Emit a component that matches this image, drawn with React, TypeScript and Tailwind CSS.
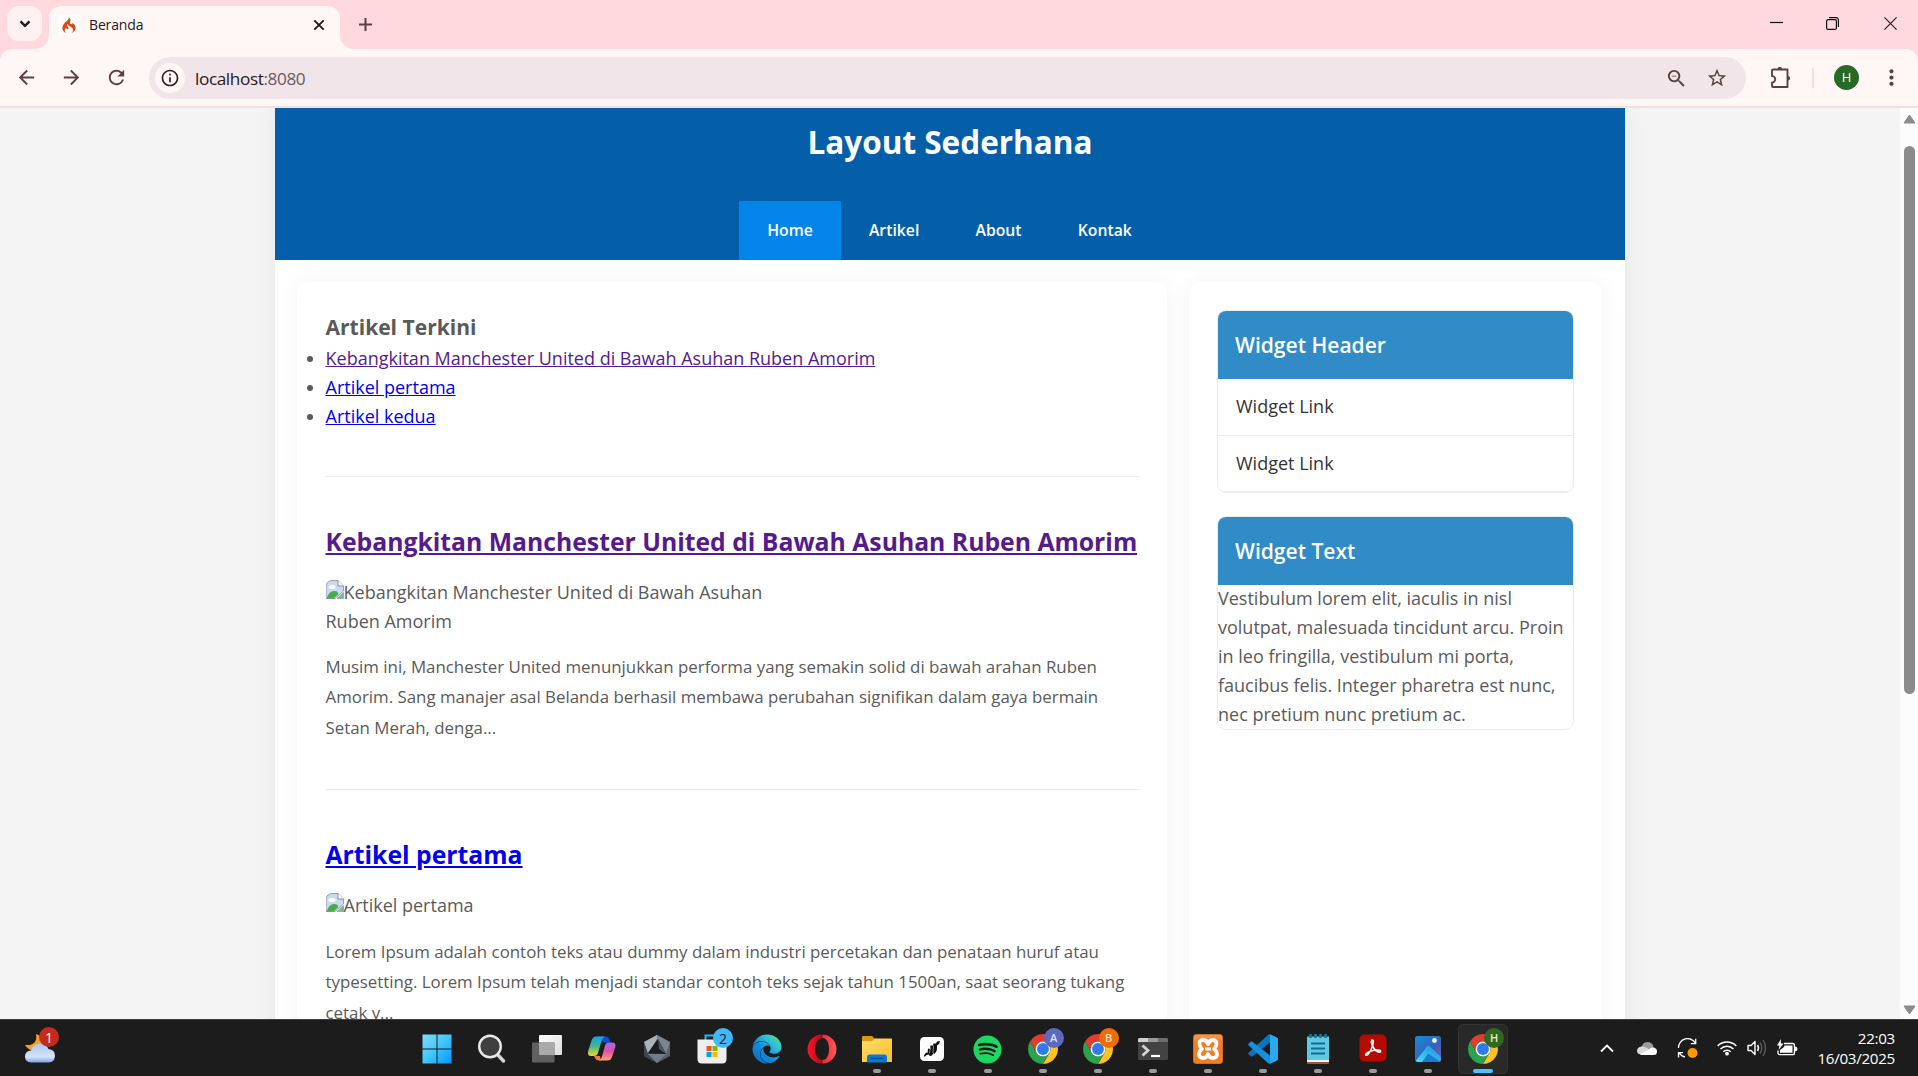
import React from "react";
import {
  MdArrowBack,
  MdArrowForward,
  MdRefresh,
  MdInfoOutline,
  MdZoomOut,
  MdStarBorder,
  MdMoreVert,
} from "react-icons/md";
import { FaSpotify, FaEdge } from "react-icons/fa";
import { SiCodeigniter } from "react-icons/si";

function TabStrip() {
  return (
    <div className="flex h-[49px] shrink-0 items-start bg-[#ffd9de] font-['Open_Sans',sans-serif]">
      <div className="relative mt-[6px] ml-[7px] flex h-[35px] w-[35px] items-center justify-center rounded-[12px] bg-[#fff0f1]">
        <svg width="12" height="8" viewBox="0 0 12 8" fill="none" stroke="#1f1a1b" strokeWidth="2.4">
          <path d="M1.5 1.3 6 5.8l4.500-4.500" />
        </svg>
      </div>
      <div className="relative mt-[6px] ml-[7px] flex h-[43px] w-[291px] items-center rounded-t-[12px] bg-[#fff7f6] pb-[6px]">
        <svg className="absolute bottom-0 -left-[14px]" width="14" height="14">
          <path d="M14 0A14 14 0 0 1 0 14H14Z" fill="#fff7f6" />
        </svg>
        <svg className="absolute -right-[14px] bottom-0" width="14" height="14">
          <path d="M0 0A14 14 0 0 0 14 14H0Z" fill="#fff7f6" />
        </svg>
        <div className="ml-[10px] flex h-[20px] w-[20px] shrink-0 items-center justify-center bg-white">
          <SiCodeigniter className="h-[16px] w-[16px] text-[#dd4814]" />
        </div>
        <span className="ml-[10px] w-[224px] shrink-0 text-[14px] tracking-[-0.15px] text-[#27191b]">Beranda</span>
        <svg width="12" height="12" viewBox="0 0 12 12" stroke="#1f1a1b" strokeWidth="1.9" className="shrink-0">
          <path d="M1.300 1.300 10.700 10.700M10.700 1.300 1.300 10.700" />
        </svg>
      </div>
      <svg className="mt-[18px] ml-[19px]" width="13" height="13" viewBox="0 0 13 13" stroke="#5c3f43" strokeWidth="2">
        <path d="M6.500 0v13M0 6.500h13" />
      </svg>
      <div className="mt-[17px] mr-[21px] ml-auto flex items-start">
        <svg width="13" height="13" viewBox="0 0 13 13">
          <path d="M0 5.500h13" stroke="#111" strokeWidth="1.200" />
        </svg>
        <svg className="ml-[43px]" width="13" height="13" viewBox="0 0 13 13" fill="none" stroke="#111" strokeWidth="1.200">
          <rect x=".6" y="2.600" width="9.800" height="9.800" rx="1.500" />
          <path d="M3 .6h7a2.400 2.400 0 0 1 2.400 2.400v7" />
        </svg>
        <svg className="ml-[45px]" width="13" height="13" viewBox="0 0 13 13" stroke="#222" strokeWidth="1.200">
          <path d="M.4.4 12.600 12.600M12.600.4.4 12.600" />
        </svg>
      </div>
    </div>
  );
}

function Toolbar() {
  return (
    <div className="bg-[#ffd9de]">
      <div className="flex h-[57px] shrink-0 items-center rounded-t-[12px] bg-[#fff7f6]">
        <MdArrowBack className="ml-[15px] h-[23px] w-[23px] text-[#5c3f43]" />
        <MdArrowForward className="ml-[22px] h-[23px] w-[23px] text-[#5c3f43]" />
        <MdRefresh className="ml-[22px] h-[23px] w-[23px] text-[#5c3f43]" />
        <div className="ml-[21px] flex h-[42px] w-[1597px] items-center rounded-full bg-[#f2e5e9]">
          <div className="ml-[6px] flex h-[30px] w-[30px] items-center justify-center rounded-full bg-[#fff7f6]">
            <MdInfoOutline className="h-[20px] w-[20px] text-[#2b2023]" />
          </div>
          <span className="mt-[2px] ml-[10px] font-['Open_Sans',sans-serif] text-[17.200px] tracking-[-0.400px] text-[#27191b]">
            localhost<span className="text-[#6a5a5e]">:8080</span>
          </span>
          <MdZoomOut className="mt-px ml-auto h-[23px] w-[23px] text-[#54413f]" />
          <MdStarBorder className="mt-px mr-[18px] ml-[18px] h-[22px] w-[22px] text-[#54413f]" />
        </div>
        <svg className="ml-[24px]" width="22" height="22" viewBox="0 0 22 22" fill="none" stroke="#5c3f43" strokeWidth="1.900">
          <path d="M3 2.500H17.500V20H3a1 1 0 0 1-1-1V15.500a3.200 3.200 0 0 0 0-6.400V3.500a1 1 0 0 1 1-1Z" strokeLinejoin="round" />
          <path d="M7.500 2.200a2.300 2.300 0 0 1 4.600 0ZM17.800 9a2.300 2.300 0 0 1 0 4.600Z" fill="#5c3f43" stroke="none" />
        </svg>
        <div className="ml-[20px] h-[20px] w-[2px] rounded bg-[#ffd9de]" />
        <div className="ml-[20px] flex h-[25px] w-[25px] items-center justify-center rounded-full bg-[#256b25] font-['Open_Sans',sans-serif] text-[13px] text-white">
          H
        </div>
        <MdMoreVert className="ml-[20px] h-[25px] w-[25px] text-[#5c3f43]" />
      </div>
      <div className="h-[2px] bg-[#f5dde0]" />
    </div>
  );
}

function BrokenImage() {
  return (
    <svg className="inline-block align-baseline" width="18" height="19" viewBox="0 0 18 19">
      <path d="M0 18.500V7Q0 .5 7 .5H12L17.500 6V11L9 18.500Z" fill="#c8daf6" stroke="#9aa0a6" strokeWidth="1" />
      <path d="M12 .5V6h5.500" fill="#fff" stroke="#8c9196" strokeWidth="1" />
      <ellipse cx="6" cy="7" rx="3.500" ry="2" fill="#fff" />
      <path d="M.5 18.500Q3 11 8 11T12 14.500L7.500 18.500Z" fill="#46ad47" />
      <path d="M11 18.500 17.500 12.500V18.500Z" fill="#7fb888" stroke="#9aa0a6" strokeWidth=".8" />
    </svg>
  );
}

const navItems = ["Home", "Artikel", "About", "Kontak"];

function SiteHeader() {
  return (
    <header className="h-[152px] bg-[#045fa8] text-white">
      <h1 className="h-[93px] pt-[9px] text-center text-[31.500px] leading-[50px] font-bold">Layout Sederhana</h1>
      <nav className="flex h-[59px] justify-center pr-[1px]">
        {navItems.map((item, i) => (
          <a
            key={item}
            className={
              i === 0
                ? "flex items-center bg-[#0284e8] px-[28.100px] text-[15.750px] font-semibold"
                : "flex items-center px-[28.100px] text-[15.750px] font-semibold"
            }
          >
            {item}
          </a>
        ))}
      </nav>
    </header>
  );
}

interface ArticleProps {
  title: string;
  visited?: boolean;
  body: string;
}

function Article({ title, visited, body }: ArticleProps) {
  return (
    <article className="border-t border-[#ececec] pt-[45px] pb-[45.600px]">
      <h2
        className={
          visited
            ? "text-[24.750px] leading-[39.500px] font-bold whitespace-nowrap text-[#551a8b] underline"
            : "text-[24.750px] leading-[39.500px] font-bold text-[#0000ee] underline"
        }
      >
        {title}
      </h2>
      <p className={visited ? "mt-[16px] mb-[16.400px] w-[450px] leading-[29px]" : "mt-[17px] mb-[17px] w-[450px] leading-[29px]"}>
        <BrokenImage />
        {title}
      </p>
      <p className="text-[16.875px] leading-[30.375px]">{body}</p>
    </article>
  );
}

function MainColumn() {
  return (
    <main className="w-[870px] rounded-[11px] bg-white py-[28px] pr-[27.500px] pl-[28.500px] shadow-[0_0_22px_rgba(0,0,0,0.05)]">
      <h3 className="text-[21.060px] leading-[34px] font-bold">Artikel Terkini</h3>
      <ul className="mb-[45px] list-disc leading-[29px]">
        <li>
          <a className="text-[#551a8b] underline">Kebangkitan Manchester United di Bawah Asuhan Ruben Amorim</a>
        </li>
        <li>
          <a className="text-[#0000ee] underline">Artikel pertama</a>
        </li>
        <li>
          <a className="text-[#0000ee] underline">Artikel kedua</a>
        </li>
      </ul>
      <Article
        visited
        title="Kebangkitan Manchester United di Bawah Asuhan Ruben Amorim"
        body="Musim ini, Manchester United menunjukkan performa yang semakin solid di bawah arahan Ruben Amorim. Sang manajer asal Belanda berhasil membawa perubahan signifikan dalam gaya bermain Setan Merah, denga..."
      />
      <Article
        title="Artikel pertama"
        body="Lorem Ipsum adalah contoh teks atau dummy dalam industri percetakan dan penataan huruf atau typesetting. Lorem Ipsum telah menjadi standar contoh teks sejak tahun 1500an, saat seorang tukang cetak y..."
      />
    </main>
  );
}

function Widget({ title, children }: { title: string; children: React.ReactNode }) {
  return (
    <section className="mb-[23.500px] overflow-hidden rounded-[9px] border border-[#ececec]">
      <h3 className="bg-[#308bc7] px-[17px] text-[21.060px] leading-[67.500px] font-semibold text-white">{title}</h3>
      {children}
    </section>
  );
}

function Sidebar() {
  return (
    <aside className="w-[413px] rounded-[11px] bg-white p-[28px] shadow-[0_0_22px_rgba(0,0,0,0.05)]">
      <Widget title="Widget Header">
        <ul className="text-[#333]">
          <li className="border-b border-[#ececec] px-[18px] pb-[2px] leading-[54px]">Widget Link</li>
          <li className="border-b border-[#ececec] px-[18px] leading-[55px]">Widget Link</li>
        </ul>
      </Widget>
      <Widget title="Widget Text">
        <p className="-mt-px leading-[29px]">
          Vestibulum lorem elit, iaculis in nisl volutpat, malesuada tincidunt arcu. Proin in leo fringilla, vestibulum
          mi porta, faucibus felis. Integer pharetra est nunc, nec pretium nunc pretium ac.
        </p>
      </Widget>
    </aside>
  );
}

function Scrollbar() {
  return (
    <div className="flex w-[18px] shrink-0 flex-col items-center bg-[#fcfcfc]">
      <svg className="mt-[6px] ml-[1px]" width="13" height="10" viewBox="0 0 13 10">
        <path d="M6.500 1 12 9H1Z" fill="#8b8b8b" stroke="#8b8b8b" strokeLinejoin="round" />
      </svg>
      <div className="mt-[22px] ml-[1px] h-[548px] w-[11px] rounded-full bg-[#8b8b8b]" />
      <svg className="mt-auto mb-[4px] ml-[1px]" width="13" height="10" viewBox="0 0 13 10">
        <path d="M6.500 9 12 1H1Z" fill="#8b8b8b" stroke="#8b8b8b" strokeLinejoin="round" />
      </svg>
    </div>
  );
}

function ChromeIcon() {
  return (
    <svg width="30" height="30" viewBox="2 2 44 44">
      <path d="M4.950 13A22 22 0 0 1 43.050 13L24 13A11 11 0 0 0 14.470 29.500Z" fill="#e33b2e" />
      <path d="M43.050 13A22 22 0 0 1 24 46L33.530 29.500A11 11 0 0 0 24 13Z" fill="#fcc31e" />
      <path d="M24 46A22 22 0 0 1 4.950 13L14.470 29.500A11 11 0 0 0 33.530 29.500Z" fill="#2ba24c" />
      <circle cx="24" cy="24" r="11" fill="#fff" />
      <circle cx="24" cy="24" r="8.700" fill="#2f7bea" />
    </svg>
  );
}

function ProfileChrome({ letter, tone }: { letter: string; tone: string }) {
  return (
    <div className="relative">
      <ChromeIcon />
      <span
        className={
          "absolute -top-[6px] left-[16px] flex h-[20px] w-[20px] items-center justify-center rounded-full text-[11px] font-semibold " +
          tone
        }
      >
        {letter}
      </span>
    </div>
  );
}

function StartIcon() {
  return (
    <svg width="30" height="30" viewBox="0 0 30 30">
      <defs>
        <linearGradient id="start" x1="0" y1="0" x2="29" y2="29" gradientUnits="userSpaceOnUse">
          <stop offset="0" stopColor="#84dcff" />
          <stop offset=".5" stopColor="#41c8fd" />
          <stop offset="1" stopColor="#0597ff" />
        </linearGradient>
      </defs>
      <path d="M.5.5h14v14H.5zM15.500.5h14v14h-14zM.5 15.500h14v14H.5zM15.500 15.500h14v14h-14z" fill="url(#start)" />
    </svg>
  );
}

function SearchIcon() {
  return (
    <svg width="30" height="30" viewBox="0 0 30 30">
      <path d="M19.500 19.500 26.500 27" stroke="#d5d7da" strokeWidth="3.400" strokeLinecap="round" />
      <circle cx="13" cy="12.500" r="10.800" fill="#3f3f3f" stroke="#e9e9e9" strokeWidth="2.400" />
    </svg>
  );
}

function TaskViewIcon() {
  return (
    <svg width="30" height="30" viewBox="0 0 30 30">
      <defs>
        <linearGradient id="tv" x1="0" y1="0" x2="1" y2="1">
          <stop offset="0" stopColor="#fff" />
          <stop offset="1" stopColor="#dcdcdc" />
        </linearGradient>
      </defs>
      <rect x="7" y="1" width="23" height="20" rx="1" fill="url(#tv)" />
      <rect x="0" y="8.500" width="22.500" height="20" rx="1" fill="#606060" />
      <path d="M7 8.500H22.500V21H8a1 1 0 0 1-1-1Z" fill="#a9a9a9" />
    </svg>
  );
}

function CopilotIcon() {
  return (
    <svg width="30" height="30" viewBox="0 0 30 30">
      <defs>
        <linearGradient id="cpa" x1="0" y1="0" x2="0" y2="1">
          <stop offset="0" stopColor="#1ba0ea" />
          <stop offset=".5" stopColor="#3fb98c" />
          <stop offset="1" stopColor="#f4d522" />
        </linearGradient>
        <linearGradient id="cpb" x1="0" y1="0" x2="0" y2="1">
          <stop offset="0" stopColor="#a469f5" />
          <stop offset=".5" stopColor="#e54fa6" />
          <stop offset="1" stopColor="#ffa564" />
        </linearGradient>
      </defs>
      <path d="M9 2.500H19Q21.500 2.500 22.300 5L23.500 8.500H17Z" fill="#1749d6" />
      <path d="M7 22H13L14 26.500H12Q9 26.500 8 24Z" fill="#f47a55" />
      <path d="M9 2.500H18Q15.500 3.500 14.500 7L11 19Q10 22 7 22H4Q0 22 1.200 17L4.500 6.500Q6 2.500 9 2.500Z" fill="url(#cpa)" />
      <path d="M21.500 8.500H25Q29.500 8.500 28.300 13L25 23Q23.700 26.500 20.500 26.500H11.500Q14 26 15 22.500L18 11.500Q19 8.500 21.500 8.500Z" fill="url(#cpb)" />
    </svg>
  );
}

function CubeIcon() {
  return (
    <svg width="30" height="30" viewBox="0 0 30 30">
      <path d="M15 1 28 8V22L15 29 2 22V8Z" fill="#59616a" />
      <path d="M15 1 28 8 24 20 15 5Z" fill="#7c848d" />
      <path d="M15 1 2 8 6 20 15 5Z" fill="#aab2ba" />
      <path d="M2 8 6 20 15 29 2 22Z" fill="#3f464d" />
      <path d="M6 20 24 20 15 29Z" fill="#737b84" />
      <path d="M16 5 24 20 5.500 19.500Z" fill="#191c20" />
      <path d="M16 5 24 20 17 15Z" fill="#4d545b" />
    </svg>
  );
}

function StoreIcon() {
  return (
    <div className="relative">
      <svg width="30" height="30" viewBox="0 0 30 30">
        <path d="M8.500 7V1.500H20" fill="none" stroke="#28b7ee" strokeWidth="2" />
        <path d="M.5 5.500H29.500V25Q29.500 29.500 25 29.500H5Q.5 29.500 .5 25Z" fill="#eeeeee" />
        <path d="M9.500 12h5v5h-5z" fill="#f25022" />
        <path d="M15.500 12h5v5h-5z" fill="#7fba00" />
        <path d="M9.500 18h5v5h-5z" fill="#00a4ef" />
        <path d="M15.500 18h5v5h-5z" fill="#ffb900" />
      </svg>
      <span className="absolute -top-[6px] left-[16px] flex h-[20px] w-[20px] items-center justify-center rounded-full bg-[#42b8fc] text-[14px] text-[#10242f]">
        2
      </span>
    </div>
  );
}

function EdgeIcon() {
  return (
    <div>
      <svg width="0" height="0" className="absolute">
        <defs>
          <linearGradient id="edge" x1="0" y1="1" x2="1" y2="0">
            <stop offset="0" stopColor="#0c62b8" />
            <stop offset=".45" stopColor="#1590df" />
            <stop offset=".7" stopColor="#2fc3d8" />
            <stop offset="1" stopColor="#6ae05a" />
          </linearGradient>
        </defs>
      </svg>
      <FaEdge className="h-[30px] w-[30px] [&_path]:fill-[url(#edge)]" />
    </div>
  );
}

function OperaIcon() {
  return (
    <svg width="30" height="30" viewBox="0 0 30 30">
      <defs>
        <linearGradient id="opera" x1="0" y1="0" x2="1" y2="0">
          <stop offset="0" stopColor="#f8152c" />
          <stop offset=".5" stopColor="#b30a17" />
          <stop offset=".55" stopColor="#ee2b36" />
          <stop offset="1" stopColor="#ff5a5a" />
        </linearGradient>
      </defs>
      <path
        fillRule="evenodd"
        fill="url(#opera)"
        d="M15 .5a14.500 14.500 0 1 1 0 29a14.500 14.500 0 1 1 0-29ZM15.500 4C11 4 8 9 8 15s3 11 7.500 11S22 21 22 15 20 4 15.500 4Z"
      />
    </svg>
  );
}

function FolderIcon() {
  return (
    <svg width="30" height="30" viewBox="0 0 30 30">
      <defs>
        <linearGradient id="folder" x1="0" y1="0" x2="1" y2="1">
          <stop offset="0" stopColor="#ffdc6b" />
          <stop offset="1" stopColor="#fbbf2a" />
        </linearGradient>
      </defs>
      <path d="M0 3Q0 2 1 2H10L13 5V9H0Z" fill="#dc9b06" />
      <path d="M0 7H10L13 4.500H29.500Q30 4.500 30 5.500V28H0Z" fill="url(#folder)" />
      <path d="M5 28.500V23Q5 20.500 7.500 20.500H22.500Q25 20.500 25 23V28.500Z" fill="#0d78cf" />
      <path d="M9 24.500H21" stroke="#0a4f91" strokeWidth="1.300" strokeLinecap="round" />
    </svg>
  );
}

function StrokesIcon() {
  return (
    <svg width="24" height="24" viewBox="0 0 24 24">
      <rect width="24" height="24" rx="4.500" fill="#fff" />
      <path
        d="M4 18.500 6 15.500 7.500 16 8 11.500 10 12 10.500 8.500 13 8.500 13.500 6.500 16 6.500 17 4.500 19.800 4 19.500 6.500 17 8.500 16.800 13.500 14.500 17 13.500 16 12 18.500 9.500 19 9 17.500 6.500 18 4.500 20Z"
        fill="#0d0d0d"
      />
      <path d="M9.300 16.500 10.600 10.500M13 16 13.500 8.500" stroke="#fff" strokeWidth=".5" />
    </svg>
  );
}

function TerminalIcon() {
  return (
    <svg width="30" height="30" viewBox="0 0 30 30">
      <rect y="4" width="30" height="22" rx="1.500" fill="#434343" />
      <path d="M0 8V5.500Q0 4 1.500 4H10V8Z" fill="#d0d0d0" />
      <path d="M10 4H20V8H10Z" fill="#9a9a9a" />
      <path d="M20 4h8.500Q30 4 30 5.500V8H20Z" fill="#6c6c6c" />
      <path d="M4.500 11.500 10 16.500 4.500 21.500" fill="none" stroke="#d4d4d4" strokeWidth="2.800" />
      <path d="M13 22H22" stroke="#fff" strokeWidth="2.200" />
    </svg>
  );
}

function XamppIcon() {
  return (
    <div className="flex h-[30px] w-[30px] items-center justify-center rounded-[3px] border border-[#c9702b] bg-linear-to-b from-[#f79a52] to-[#f57c20] to-25%">
      <svg width="24" height="24" viewBox="0 0 24 24" fill="none" stroke="#fff" strokeWidth="3.800" strokeLinejoin="round">
        <path d="M12 7Q11 3 7 3T3.500 7Q3.500 9.500 6 12Q3 14 3 17.500Q3.500 21 7 21Q11 21 12 17Q13 21 17 21Q20.500 21 21 17.500Q21 14 18 12Q20.500 9.500 20.500 7Q20.500 3 17 3T12 7Z" />
        <path d="M9 12H15" strokeWidth="3.200" />
      </svg>
    </div>
  );
}

function CodeIcon() {
  return (
    <svg width="30" height="30" viewBox="0 0 30 30">
      <path d="M22 .3 29 3.500Q30 4 30 5V25Q30 26 29 26.500L22 29.700Z" fill="#29a9f2" />
      <path d="M22 .3V8.500L4.500 22.300Q3.500 23 2.700 22.300L.7 20.500Q-.3 19.500 .7 18.500L20.500.5Q21 0 22 .3Z" fill="#0b72bd" />
      <path d="M22 29.700V21.500L4.500 7.700Q3.500 7 2.700 7.700L.7 9.500Q-.3 10.500 .7 11.500L20.500 29.500Q21 30 22 29.700Z" fill="#1590dc" />
    </svg>
  );
}

function NotepadIcon() {
  return (
    <svg width="30" height="30" viewBox="0 0 30 30">
      <rect x="4" y="24" width="22" height="6" rx="1" fill="#a3592a" />
      <rect x="4" y="22" width="22" height="6" fill="#f2f2f2" />
      <rect x="4" y="2.500" width="22" height="23.500" fill="#5fc8e2" />
      <path d="M8 9.500H22M8 14.500H22M8 19.500H22" stroke="#0e6f92" strokeWidth="2" />
      <path d="M7.500 0V4M12.500 0V4M17.500 0V4M22.500 0V4" stroke="#0e7ba3" strokeWidth="2.600" />
    </svg>
  );
}

function AcrobatIcon() {
  return (
    <svg width="28" height="28" viewBox="0 0 28 28" className="mb-[2px]">
      <rect x=".5" y=".5" width="27" height="27" rx="5" fill="#b30b00" />
      <path
        d="M12.800 6.200C14.800 5 14.500 9.500 13.300 12.500 12 16 9.500 21 7.500 21.300 5.300 21.300 7.500 18.500 12 17 16 15.700 21.500 15.500 21.600 17.300 21.500 19.500 16.500 17.500 14.300 13.500 12.700 10.500 12 7.500 12.800 6.200Z"
        fill="none"
        stroke="#fff"
        strokeWidth="1.600"
      />
    </svg>
  );
}

function PhotosIcon() {
  return (
    <svg width="26" height="26" viewBox="0 0 26 26">
      <defs>
        <linearGradient id="ph" x1="0" y1="0" x2="1" y2="1">
          <stop offset="0" stopColor="#128fdd" />
          <stop offset=".6" stopColor="#3a5fb6" />
          <stop offset="1" stopColor="#8a5cc0" />
        </linearGradient>
        <linearGradient id="ph2" x1="0" y1="1" x2="1" y2="0">
          <stop offset="0" stopColor="#4bdcf8" />
          <stop offset="1" stopColor="#1690e0" />
        </linearGradient>
      </defs>
      <rect width="26" height="26" rx="2.500" fill="url(#ph)" />
      <path d="M1 24.500 12 10.500Q13.500 9 15 10.500L25.800 21V23.500Q25.500 26 23.500 26H2.500Q1 26 1 24.500Z" fill="url(#ph2)" />
      <path d="M13.200 17.500 25.800 26H7Z" fill="#1572ca" opacity=".85" />
      <circle cx="19.500" cy="4.500" r="2.400" fill="#f2faff" />
    </svg>
  );
}

interface TaskItem {
  name: string;
  icon: React.ReactNode;
  running?: boolean;
  active?: boolean;
}

const taskItems: TaskItem[] = [
  { name: "start", icon: <StartIcon /> },
  { name: "search", icon: <SearchIcon /> },
  { name: "taskview", icon: <TaskViewIcon /> },
  { name: "copilot", icon: <CopilotIcon /> },
  { name: "cube", icon: <CubeIcon /> },
  { name: "store", icon: <StoreIcon /> },
  { name: "edge", icon: <EdgeIcon /> },
  { name: "opera", icon: <OperaIcon /> },
  { name: "files", icon: <FolderIcon />, running: true },
  { name: "strokes", icon: <StrokesIcon />, running: true },
  { name: "spotify", icon: <FaSpotify className="h-[29px] w-[29px] text-[#1ed760]" />, running: true },
  { name: "chrome-a", icon: <ProfileChrome letter="A" tone="bg-[#5c6bc0] text-[#dfe3f7]" />, running: true },
  { name: "chrome-b", icon: <ProfileChrome letter="B" tone="bg-[#ef6c00] text-[#ffe3c9]" />, running: true },
  { name: "terminal", icon: <TerminalIcon />, running: true },
  { name: "xampp", icon: <XamppIcon />, running: true },
  { name: "code", icon: <CodeIcon />, running: true },
  { name: "notepad", icon: <NotepadIcon />, running: true },
  { name: "acrobat", icon: <AcrobatIcon />, running: true },
  { name: "photos", icon: <PhotosIcon />, running: true },
  { name: "chrome-h", icon: <ProfileChrome letter="H" tone="bg-[#33691e] text-[#e0ecd9]" />, running: true, active: true },
];

function Tray() {
  return (
    <div className="mr-[23px] ml-auto flex items-center text-white">
      <svg width="14" height="9" viewBox="0 0 14 9" fill="none" stroke="#fff" strokeWidth="1.800">
        <path d="M1 7.500 7 1.500 13 7.500" />
      </svg>
      <svg className="ml-[23px]" width="20" height="13" viewBox="0 0 20 13">
        <path d="M4 7Q5 0 10.500 0Q15 0 16.500 4.500L10 9Z" fill="#9b9b9b" />
        <path d="M0 9Q0 5 4.500 4.500Q7.500 4 10 6L14 9 5 12.500Q0 12.500 0 9Z" fill="#d7d7d7" />
        <path d="M3 12 12 7.500Q14 4.500 17 5.500Q20 6.500 20 9.500 20 13 16.500 13H4Z" fill="#fff" />
      </svg>
      <svg className="ml-[20px]" width="21" height="21" viewBox="0 0 21 21" fill="none" stroke="#fff" strokeWidth="1.300">
        <path d="M1.500 10A9 9 0 0 1 18.500 5.500M18.700.8V5.700H13.800M8 19A9 9 0 0 1 2 14.500M1.500 19.500V14.700H6" />
        <circle cx="15.500" cy="15" r="5" fill="#ff9800" stroke="none" />
      </svg>
      <svg className="ml-[19px]" width="20" height="16" viewBox="0 0 20 16" fill="none" stroke="#fff" strokeWidth="1.500">
        <path d="M.7 6A13 13 0 0 1 19.300 6M3.500 9A9 9 0 0 1 16.500 9M6.300 11.700A5.300 5.300 0 0 1 13.700 11.700" />
        <circle cx="10" cy="13.700" r="1.900" fill="#fff" stroke="none" />
      </svg>
      <svg className="ml-[10px]" width="20" height="18" viewBox="0 0 20 18" fill="none" stroke="#fff" strokeWidth="1.400">
        <path d="M1 6.500H4L8 2.500V15.500L4 11.500H1Z" strokeLinejoin="round" />
        <path d="M10.500 6Q12.500 9 10.500 12" />
        <path d="M13 3.500Q16.500 9 13 14.500M16 1Q21 9 16 17" stroke="#5c5c5c" />
      </svg>
      <svg className="ml-[10px]" width="21" height="18" viewBox="0 0 21 18">
        <path d="M7 4.500H15.500Q17.500 4.500 17.500 6.500V13.500Q17.500 15.700 15.500 15.700H3Q1 15.700 1 13.500V11.500" fill="none" stroke="#fff" strokeWidth="1.300" />
        <path d="M7.500 6.500H15.500V13.700H3V11L7 8Z" fill="#fff" />
        <path d="M18.300 8V12Q20 12 20 10T18.300 8Z" fill="#fff" stroke="#fff" />
        <path d="M4 0 0 6.500H2.500L1.500 11 6.500 4.500H3.800Z" fill="#fff" />
      </svg>
      <div className="ml-[17px] w-[80px] text-right text-[15.200px] leading-[20px] tracking-[-0.300px] whitespace-nowrap">
        <div>22:03</div>
        <div>16/03/2025</div>
      </div>
    </div>
  );
}

function Taskbar() {
  return (
    <footer className="flex h-[57px] shrink-0 border-t border-[#3d3f3e] bg-[#1c1c1c] font-['Open_Sans',sans-serif]">
      <div className="w-[409.200px] shrink-0">
        <div className="relative mt-[13px] ml-[25px] h-[32px] w-[32px]">
          <svg width="31" height="31" viewBox="0 0 31 31">
            <defs>
              <linearGradient id="cloud" x1="0" y1="0" x2="0" y2="1">
                <stop offset="0" stopColor="#a9c6f5" />
                <stop offset=".7" stopColor="#d6e4fb" />
                <stop offset="1" stopColor="#7ea2e8" />
              </linearGradient>
            </defs>
            <path d="M11 1Q20 4 19 12T9 18Q3 17 0 12Q13 13 11 1Z" fill="#f3a321" />
            <path d="M6 29.500Q0 29 0 23.500 0 18 6 17.500 8 10.500 15 10.500 21 10.500 23.500 16 30 16.500 30 23 29.500 29 24 29.500Z" fill="url(#cloud)" />
          </svg>
          <span className="absolute -top-[6px] left-[14px] flex h-[20px] w-[20px] items-center justify-center rounded-full bg-[#c42b1c] text-[14px] text-white">
            1
          </span>
        </div>
      </div>
      {taskItems.map((t) => (
        <div key={t.name} className="flex w-[55.080px] shrink-0 justify-center">
          <div
            className={
              t.active
                ? "mt-[4px] flex h-[50px] w-[50px] flex-col items-center rounded-[5px] border border-[#333] bg-[#292929]"
                : "mt-[4px] flex h-[50px] w-[50px] flex-col items-center border border-transparent"
            }
          >
            <div className="mt-[8px] flex h-[32px] items-center">{t.icon}</div>
            {t.running && (
              <div
                className={
                  t.active ? "mt-[4px] h-[4px] w-[20px] rounded-full bg-[#4cc2ff]" : "mt-[4px] h-[4px] w-[8px] rounded-full bg-[#9a9a9a]"
                }
              />
            )}
          </div>
        </div>
      ))}
      <Tray />
    </footer>
  );
}

export default function App() {
  return (
    <div className="flex h-[1076px] w-[1918px] flex-col overflow-hidden">
      <TabStrip />
      <Toolbar />
      <div className="flex min-h-0 flex-1 overflow-hidden">
        <div className="flex flex-1 justify-center overflow-hidden bg-[#f4f4f4]">
          <div className="h-[1200px] w-[1350px] bg-white font-['Open_Sans',sans-serif] text-[18px] text-[#5a5a5a] shadow-[0_0_22px_rgba(0,0,0,0.06)]">
            <SiteHeader />
            <div className="flex gap-[22px] pt-[22px] pl-[22px]">
              <MainColumn />
              <Sidebar />
            </div>
          </div>
        </div>
        <Scrollbar />
      </div>
      <Taskbar />
    </div>
  );
}
